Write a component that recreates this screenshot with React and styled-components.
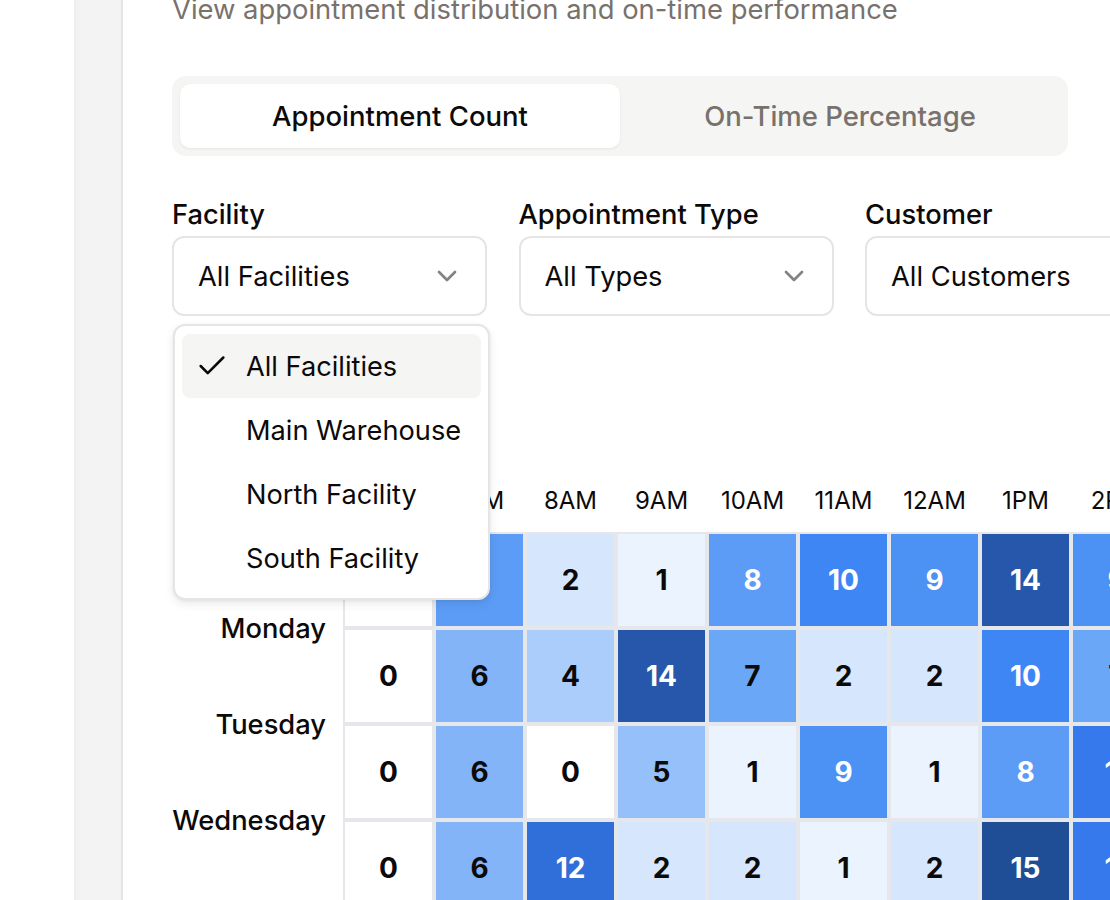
import React from 'react';
import styled, { createGlobalStyle } from 'styled-components';
import { ChevronDown, Check } from 'lucide-react';

const GlobalStyle = createGlobalStyle`
  html, body {
    margin: 0;
    padding: 0;
    background: #ffffff;
  }
  body {
    font-family: Inter, "Noto Sans", sans-serif;
    color: #0c0a09;
    overflow: hidden;
  }
  * {
    box-sizing: border-box;
  }
`;

const Page = styled.div`
  display: flex;
  width: 1110px;
  height: 900px;
  overflow: hidden;
  background: #ffffff;
`;

const Rail = styled.div`
  flex: 0 0 49px;
  margin-left: 74px;
  background: #f3f3f3;
  border-right: 2px solid #e4e4e4;
  box-shadow: inset 5px 0 6px -5px rgba(0, 0, 0, 0.05);
`;

const Main = styled.main`
  flex: 1;
  min-width: 0;
  padding: 0 42px 0 49px;
`;

const Subtitle = styled.p`
  margin: -9px 0 0;
  font-size: 27.4px;
  line-height: 36px;
  color: #78716c;
  white-space: nowrap;
`;

const Tabs = styled.div`
  margin-top: 49px;
  width: 896px;
  display: grid;
  grid-template-columns: 1fr 1fr;
  padding: 8px;
  background: #f5f5f4;
  border-radius: 14px;
`;

const Tab = styled.button`
  height: 64px;
  border: 0;
  border-radius: 10px;
  background: ${p => (p.$active ? '#ffffff' : 'transparent')};
  box-shadow: ${p => (p.$active ? '0 1px 3px rgba(0, 0, 0, 0.07)' : 'none')};
  font-family: inherit;
  font-size: 27.5px;
  font-weight: 500;
  color: ${p => (p.$active ? '#0c0a09' : '#78716c')};
`;

const Filters = styled.div`
  margin-top: 40px;
  display: grid;
  grid-template-columns: repeat(3, 315px);
  column-gap: 31.5px;
`;

const Field = styled.div`
  display: flex;
  flex-direction: column;
  gap: 2px;
`;

const Label = styled.label`
  font-size: 27.3px;
  font-weight: 500;
  line-height: 38px;
  white-space: nowrap;
`;

const SelectWrap = styled.div`
  position: relative;
`;

const Select = styled.div`
  height: 80px;
  display: flex;
  align-items: center;
  justify-content: space-between;
  padding: 0 22px 0 24px;
  border: 2px solid #e7e5e4;
  border-radius: 12px;
  background: #ffffff;
  font-size: 27.3px;
  white-space: nowrap;
  color: #0c0a09;

  svg {
    color: #0c0a09;
    opacity: 0.5;
    flex-shrink: 0;
  }
`;

const Menu = styled.ul`
  position: absolute;
  top: calc(100% + 8px);
  left: 1px;
  width: 317px;
  margin: 0;
  padding: 8px 7px;
  list-style: none;
  background: #ffffff;
  border: 2px solid #e7e5e4;
  border-radius: 12px;
  box-shadow: 0 4px 10px rgba(0, 0, 0, 0.08), 0 1px 3px rgba(0, 0, 0, 0.06);
  z-index: 10;
`;

const MenuItem = styled.li`
  height: 64px;
  display: flex;
  align-items: center;
  gap: 17px;
  padding-left: 12px;
  border-radius: 8px;
  background: ${p => (p.$selected ? '#f5f5f4' : 'transparent')};
  font-size: 27.2px;
  color: #0c0a09;
  white-space: nowrap;
`;

const CheckSlot = styled.span`
  width: 35px;
  height: 36px;
  display: flex;
  align-items: center;
  justify-content: center;
`;

const Heat = styled.section`
  margin-top: 152px;
  display: flex;
`;

const DayColumn = styled.div`
  flex: 0 0 171px;
  padding: 16px 17px 0 0;
  display: flex;
  flex-direction: column;
`;

const DayLabel = styled.div`
  height: 96px;
  display: flex;
  align-items: center;
  justify-content: flex-end;
  font-size: 27.3px;
  font-weight: 500;
  white-space: nowrap;
`;

const Chart = styled.div`
  flex-shrink: 0;
  display: flex;
  flex-direction: column;
`;

const HourRow = styled.div`
  display: grid;
  grid-template-columns: repeat(9, 87px);
  column-gap: 4px;
  padding-left: 2px;
`;

const Hour = styled.div`
  height: 64px;
  display: flex;
  align-items: center;
  justify-content: center;
  font-size: 24px;
  white-space: nowrap;
`;

const Cells = styled.div`
  display: grid;
  grid-template-columns: repeat(9, 87px);
  gap: 4px;
  padding: 2px 0 0 2px;
  background: #e5e7eb;
`;

const Cell = styled.div`
  height: 92px;
  display: flex;
  align-items: center;
  justify-content: center;
  background: ${p => p.$bg};
  color: ${p => (p.$light ? '#ffffff' : '#0c0a09')};
  font-size: 28px;
  font-weight: 700;
`;

const scale = [
  '#ffffff', '#eaf3fe', '#d5e6fd', '#c0d9fc', '#abcdfb', '#95c0fa',
  '#84b4f8', '#6ba7f7', '#5c9cf6', '#4b92f4', '#3e86f4', '#3579ec',
  '#306fda', '#2c63c3', '#2757ab', '#1f4e97',
];

const hours = ['6AM', '7AM', '8AM', '9AM', '10AM', '11AM', '12AM', '1PM', '2PM'];
const days = ['Sunday', 'Monday', 'Tuesday', 'Wednesday', 'Thursday', 'Friday', 'Saturday'];
const counts = [
  [0, 8, 2, 1, 8, 10, 9, 14, 9],
  [0, 6, 4, 14, 7, 2, 2, 10, 7],
  [0, 6, 0, 5, 1, 9, 1, 8, 11],
  [0, 6, 12, 2, 2, 1, 2, 15, 11],
  [0, 5, 7, 3, 9, 4, 6, 12, 8],
  [0, 4, 9, 6, 3, 8, 5, 11, 6],
  [0, 2, 1, 0, 2, 1, 0, 3, 1],
];

const facilities = ['All Facilities', 'Main Warehouse', 'North Facility', 'South Facility'];

const App = () => {
  return (
    <Page>
      <GlobalStyle />
      <Rail />
      <Main>
        <Subtitle>View appointment distribution and on-time performance</Subtitle>

        <Tabs>
          <Tab $active>Appointment Count</Tab>
          <Tab>On-Time Percentage</Tab>
        </Tabs>

        <Filters>
          <Field>
            <Label>Facility</Label>
            <SelectWrap>
              <Select>
                All Facilities
                <ChevronDown size={32} strokeWidth={2} />
              </Select>
              <Menu>
                {facilities.map((f, i) => (
                  <MenuItem key={f} $selected={i === 0}>
                    <CheckSlot>{i === 0 && <Check size={34} strokeWidth={1.8} />}</CheckSlot>
                    {f}
                  </MenuItem>
                ))}
              </Menu>
            </SelectWrap>
          </Field>
          <Field>
            <Label>Appointment Type</Label>
            <Select>
              All Types
              <ChevronDown size={32} strokeWidth={2} />
            </Select>
          </Field>
          <Field>
            <Label>Customer</Label>
            <Select>
              All Customers
              <ChevronDown size={32} strokeWidth={2} />
            </Select>
          </Field>
        </Filters>

        <Heat>
          <DayColumn>
            {days.map(d => (
              <DayLabel key={d}>{d}</DayLabel>
            ))}
          </DayColumn>
          <Chart>
            <HourRow>
              {hours.map(h => (
                <Hour key={h}>{h}</Hour>
              ))}
            </HourRow>
            <Cells>
              {counts.map((row, r) =>
                row.map((v, c) => (
                  <Cell key={`${r}-${c}`} $bg={scale[v]} $light={v >= 8}>
                    {v}
                  </Cell>
                ))
              )}
            </Cells>
          </Chart>
        </Heat>
      </Main>
    </Page>
  );
};

export default App;
